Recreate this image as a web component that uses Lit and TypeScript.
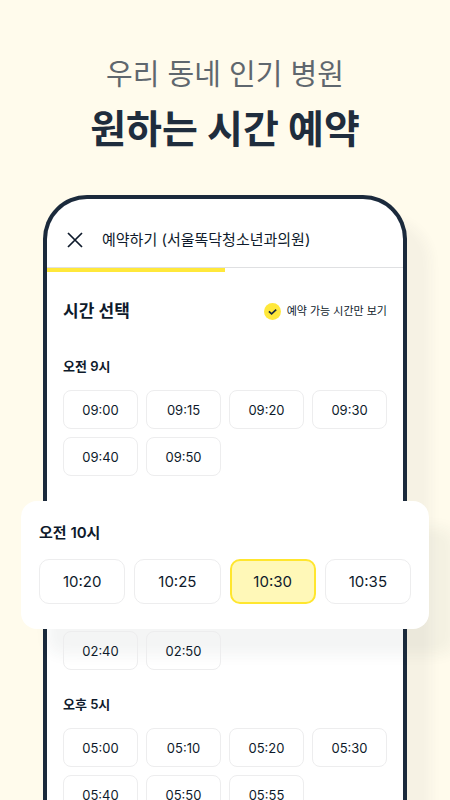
import { LitElement, html, css } from "lit";
import { customElement, property, state } from "lit/decorators.js";
import { classMap } from "lit/directives/class-map.js";

@customElement("time-group")
export class TimeGroup extends LitElement {
  @property() heading = "";
  @property({ attribute: false }) times: string[] = [];
  @property() selected = "";
  @property({ type: Boolean, reflect: true }) large = false;

  static styles = css`
    :host {
      display: block;
    }
    .heading {
      margin: 0 0 14px;
      font-size: 13px;
      line-height: 20px;
      font-weight: 600;
    }
    .grid {
      display: grid;
      grid-template-columns: repeat(4, minmax(0, 1fr));
      gap: 8px;
    }
    .slot {
      height: 39px;
      padding: 0;
      border: 1px solid #ededee;
      border-radius: 8px;
      background: transparent;
      color: inherit;
      font-family: inherit;
      font-size: 13px;
      cursor: pointer;
    }
    .selected {
      border: 2px solid #ffe62e;
      background: #fff8b8;
    }
    :host([large]) .heading {
      margin-bottom: 16px;
      font-size: 15px;
    }
    :host([large]) .grid {
      gap: 9px;
    }
    :host([large]) .slot {
      height: 45px;
      border-radius: 10px;
      font-size: 15px;
    }
  `;

  private pick(time: string) {
    this.dispatchEvent(
      new CustomEvent("pick", { detail: time, bubbles: true, composed: true })
    );
  }

  render() {
    return html`
      ${this.heading ? html`<h3 class="heading">${this.heading}</h3>` : ""}
      <div class="grid">
        ${this.times.map((time) => {
          const on = time === this.selected;
          return html`<button
            type="button"
            class=${classMap({ slot: true, selected: on })}
            aria-pressed=${on ? "true" : "false"}
            @click=${() => this.pick(time)}
          >${time}</button>`;
        })}
      </div>
    `;
  }
}

@customElement("app-root")
export class AppRoot extends LitElement {
  @state() private selected = "10:30";

  static styles = css`
    * {
      box-sizing: border-box;
    }
    :host {
      display: block;
      height: 100vh;
      overflow: hidden;
      background: #fffbec;
      color: #0e1a2b;
      font-family: Inter, "Noto Sans CJK KR", sans-serif;
    }
    .hero {
      padding: 53px 16px 38px;
      text-align: center;
    }
    .lead {
      margin: 0 0 4px;
      font-size: 29px;
      line-height: 44px;
      font-weight: 400;
      color: #5f676e;
    }
    .title {
      margin: 0;
      font-size: 39px;
      line-height: 56px;
      font-weight: 700;
      color: #1f2d3d;
    }
    .phone {
      margin: 0 43px;
      border: 4px solid #1b2a3c;
      border-bottom: 0;
      border-radius: 44px 44px 0 0;
      background: #fff;
      box-shadow: 24px 24px 12px rgba(40, 40, 60, 0.045);
    }
    .bar {
      display: flex;
      align-items: center;
      gap: 17px;
      height: 69px;
      padding: 13px 18px 0;
      border-bottom: 1px solid #dfe0e2;
    }
    .close {
      display: flex;
      padding: 0;
      border: 0;
      background: none;
      color: inherit;
      cursor: pointer;
    }
    .place {
      margin: 0;
      font-size: 15px;
      line-height: 24px;
      font-weight: 400;
    }
    .progress {
      width: 50%;
      height: 4px;
      background: #ffe83b;
    }
    .content {
      padding: 24px 16px;
    }
    .row {
      display: flex;
      align-items: center;
      justify-content: space-between;
      margin-bottom: 30px;
    }
    .section {
      margin: 0;
      font-size: 17px;
      line-height: 30px;
      font-weight: 600;
    }
    .filter {
      display: flex;
      align-items: center;
      gap: 6px;
      font-size: 11px;
      line-height: 16px;
    }
    .tick {
      display: grid;
      width: 17px;
      height: 17px;
    }
    .tick > * {
      grid-area: 1 / 1;
    }
    .box {
      width: 17px;
      height: 17px;
      margin: 0;
      appearance: none;
      border-radius: 50%;
      background: #e4e5e7;
    }
    .box:checked {
      background: #ffe83b;
    }
    .check {
      pointer-events: none;
    }
    .card {
      margin: 25px -42px 2px;
      padding: 22px 18px 25px;
      border-radius: 16px;
      background: #fff;
      box-shadow: 26px 26px 14px rgba(40, 60, 50, 0.05);
    }
    .later {
      margin-top: 24px;
    }
  `;

  render() {
    return html`
      <header class="hero">
        <p class="lead">우리 동네 인기 병원</p>
        <h1 class="title">원하는 시간 예약</h1>
      </header>
      <main class="phone" @pick=${(e: CustomEvent) => (this.selected = e.detail)}>
        <div class="bar">
          <button class="close" type="button" aria-label="닫기">
            <svg width="20" height="20" viewBox="0 0 20 20" fill="none" stroke="currentColor" stroke-width="1.7">
              <path d="M3 3L17 17M17 3L3 17" />
            </svg>
          </button>
          <h2 class="place">예약하기 (서울똑닥청소년과의원)</h2>
        </div>
        <div class="progress"></div>
        <div class="content">
          <div class="row">
            <h2 class="section">시간 선택</h2>
            <label class="filter">
              <span class="tick">
                <input class="box" type="checkbox" checked />
                <svg class="check" width="17" height="17" viewBox="0 0 17 17" fill="none" stroke="#1b2a3c" stroke-width="1.7">
                  <path d="M4.9 8.3L7.6 10.8L12.2 6.6" />
                </svg>
              </span>
              예약 가능 시간만 보기
            </label>
          </div>
          <time-group
            heading="오전 9시"
            .times=${["09:00", "09:15", "09:20", "09:30", "09:40", "09:50"]}
            .selected=${this.selected}
          ></time-group>
          <section class="card">
            <time-group
              large
              heading="오전 10시"
              .times=${["10:20", "10:25", "10:30", "10:35"]}
              .selected=${this.selected}
            ></time-group>
          </section>
          <time-group .times=${["02:40", "02:50"]} .selected=${this.selected}></time-group>
          <time-group
            class="later"
            heading="오후 5시"
            .times=${["05:00", "05:10", "05:20", "05:30", "05:40", "05:50", "05:55"]}
            .selected=${this.selected}
          ></time-group>
        </div>
      </main>
    `;
  }
}
